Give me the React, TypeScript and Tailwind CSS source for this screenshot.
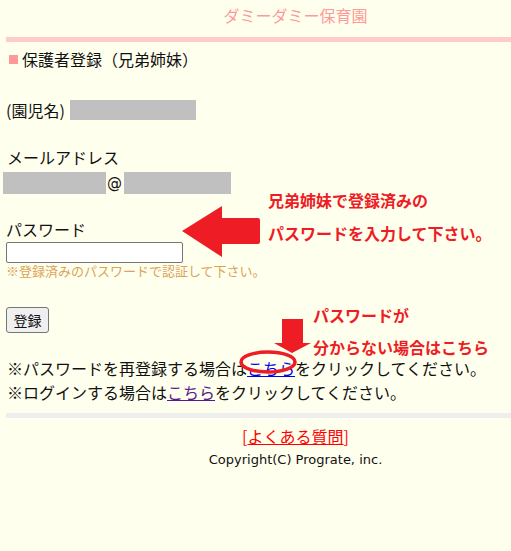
import React from "react";

export default function App() {
  return (
    <div className="relative min-h-[551px] w-[511px] bg-[#ffffee] font-['Noto_Sans_CJK_JP',sans-serif] text-[#111111]">
      {/* header */}
      <div className="ml-[6px] h-[37px] pl-[74px] pt-[5px] text-center text-[16px] leading-[20px] text-[#ff9999]">
        ダミーダミー保育園
      </div>
      <div className="ml-[6px] h-[5px] bg-[#ffcccc]" />

      <div className="ml-[9px] mt-[7px] flex items-center gap-[4px] text-[16px] leading-[20px]">
        <span className="inline-block h-[9px] w-[9px] bg-[#ff9999]" />
        <span>保護者登録（兄弟姉妹）</span>
      </div>

      {/* child name */}
      <div className="ml-[6px] mt-[31px] flex h-[20px] items-center text-[16px] leading-[20px]">
        <span>(園児名)</span>
        <span className="ml-[5px] inline-block h-[20px] w-[126px] bg-[#c0c0c0]" />
      </div>

      {/* mail */}
      <div className="ml-[7px] mt-[27px] text-[16px] leading-[20px]">メールアドレス</div>
      <div className="ml-[3px] mt-[5px] flex h-[22px] items-center text-[16px] leading-[20px]">
        <span className="inline-block h-[22px] w-[103px] bg-[#c0c0c0]" />
        <span className="ml-[1px] font-['DejaVu_Sans',sans-serif] text-[15px]">@</span>
        <span className="ml-[2px] inline-block h-[22px] w-[107px] bg-[#c0c0c0]" />
      </div>

      {/* password */}
      <div className="ml-[6px] mt-[25px] text-[16px] leading-[20px]">パスワード</div>
      <input
        type="password"
        className="ml-[6px] mt-[3px] block h-[21px] w-[177px] rounded-[2px] border border-[#767676] bg-white px-[2px] text-[13px] outline-none"
      />
      <div className="ml-[6px] text-[13px] leading-[16px] text-[#dba357]">
        ※登録済みのパスワードで認証して下さい。
      </div>

      <button className="ml-[6px] mt-[28px] block h-[26px] w-[43px] rounded-[3px] border border-[#767676] bg-[#efefef] text-[14px] leading-[20px]">
        登録
      </button>

      <div className="ml-[7px] mt-[23px] text-[16px] leading-[24px]">
        <div>
          ※パスワードを再登録する場合は
          <a href="#" className="text-[#0000ee] underline">
            こちら
          </a>
          をクリックしてください。
        </div>
        <div>
          ※ログインする場合は
          <a href="#" className="text-[#551a8b] underline">
            こちら
          </a>
          をクリックしてください。
        </div>
      </div>

      <div className="ml-[6px] mt-[9px] h-[5px] bg-[#eeeeee]" />

      <div className="ml-[6px] mt-[8px] pl-[74px] text-center text-[16px] leading-[20px] text-[#ff0000]">
        [<a href="#" className="underline">よくある質問</a>]
      </div>
      <div className="ml-[6px] mt-[6px] pl-[74px] text-center font-['DejaVu_Sans',sans-serif] text-[13px] leading-[16px]">
        Copyright(C) Prograte, inc.
      </div>

      {/* annotations */}
      <svg className="absolute left-0 top-0" width="511" height="551" viewBox="0 0 511 551">
        <path
          d="M182 231 L222 206 L222 218 L258 218 Q260 218 260 220 L260 242 Q260 244 258 244 L222 244 L222 257 Z"
          fill="#ee1c24"
        />
        <path d="M282 319 L303 319 L303 343 L311 343 L292 353 L274 343 L282 343 Z" fill="#ee1c24" />
        <ellipse cx="268" cy="362" rx="27" ry="10" fill="none" stroke="#ee1c24" strokeWidth="3.5" />
      </svg>
      <div className="absolute left-[268px] top-[190px] text-[16px] font-bold leading-[20px] text-[#ee1c24]">
        兄弟姉妹で登録済みの
      </div>
      <div className="absolute left-[268px] top-[223px] text-[16px] font-bold leading-[20px] text-[#ee1c24]">
        パスワードを入力して下さい。
      </div>
      <div className="absolute left-[313px] top-[305px] text-[16px] font-bold leading-[20px] text-[#ee1c24]">
        パスワードが
      </div>
      <div className="absolute left-[313px] top-[337px] text-[16px] font-bold leading-[20px] text-[#ee1c24]">
        分からない場合はこちら
      </div>
    </div>
  );
}
